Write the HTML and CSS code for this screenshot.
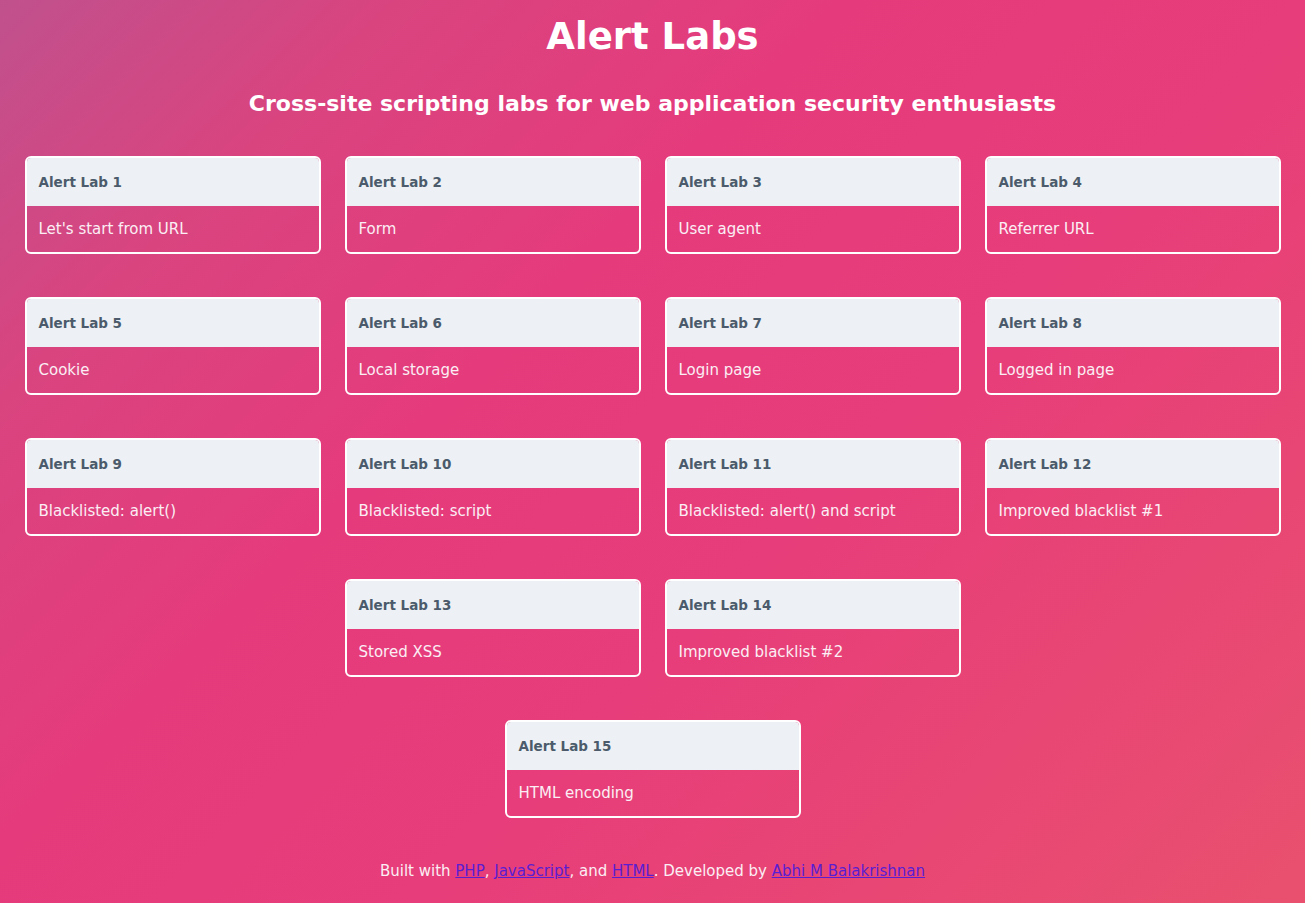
FILE: index.html
```html
<!DOCTYPE html>
<html lang="en">
<head>
<meta charset="utf-8">
<title>Alert Labs</title>
<link rel="stylesheet" href="styles.css">
</head>
<body>
<header class="hero">
  <h1 class="title">Alert Labs</h1>
  <h2 class="subtitle">Cross-site scripting labs for web application security enthusiasts</h2>
</header>
<main class="labs">
  <div class="row">
    <a class="card" href="#"><div class="card-head">Alert Lab 1</div><div class="card-body">Let's start from URL</div></a>
    <a class="card" href="#"><div class="card-head">Alert Lab 2</div><div class="card-body">Form</div></a>
    <a class="card" href="#"><div class="card-head">Alert Lab 3</div><div class="card-body">User agent</div></a>
    <a class="card" href="#"><div class="card-head">Alert Lab 4</div><div class="card-body">Referrer URL</div></a>
  </div>
  <div class="row">
    <a class="card" href="#"><div class="card-head">Alert Lab 5</div><div class="card-body">Cookie</div></a>
    <a class="card" href="#"><div class="card-head">Alert Lab 6</div><div class="card-body">Local storage</div></a>
    <a class="card" href="#"><div class="card-head">Alert Lab 7</div><div class="card-body">Login page</div></a>
    <a class="card" href="#"><div class="card-head">Alert Lab 8</div><div class="card-body">Logged in page</div></a>
  </div>
  <div class="row">
    <a class="card" href="#"><div class="card-head">Alert Lab 9</div><div class="card-body">Blacklisted: alert()</div></a>
    <a class="card" href="#"><div class="card-head">Alert Lab 10</div><div class="card-body">Blacklisted: script</div></a>
    <a class="card" href="#"><div class="card-head">Alert Lab 11</div><div class="card-body">Blacklisted: alert() and script</div></a>
    <a class="card" href="#"><div class="card-head">Alert Lab 12</div><div class="card-body">Improved blacklist #1</div></a>
  </div>
  <div class="row">
    <a class="card" href="#"><div class="card-head">Alert Lab 13</div><div class="card-body">Stored XSS</div></a>
    <a class="card" href="#"><div class="card-head">Alert Lab 14</div><div class="card-body">Improved blacklist #2</div></a>
  </div>
  <div class="row">
    <a class="card" href="#"><div class="card-head">Alert Lab 15</div><div class="card-body">HTML encoding</div></a>
  </div>
</main>
<footer class="footer">
  Built with <a href="#">PHP</a>, <a href="#">JavaScript</a>, and <a href="#">HTML</a>. Developed by <a href="#">Abhi M Balakrishnan</a>
</footer>
</body>
</html>
```
FILE: styles.css
```css
html, body {
  margin: 0;
  padding: 0;
}
body {
  min-height: 903px;
  font-family: "DejaVu Sans", "Noto Sans", sans-serif;
  color: #fff;
  background: linear-gradient(135deg, #c0518d 0%, #d9447f 18%, #e53b7c 38%, #e73d7a 60%, #e9506e 100%);
  background-attachment: fixed;
}
.hero {
  text-align: center;
  padding-top: 14px;
}
.title {
  margin: 0;
  font-size: 37px;
  line-height: 46px;
  font-weight: 700;
}
.subtitle {
  margin: 29px 0 0;
  font-size: 22px;
  line-height: 30px;
  font-weight: 700;
}
.labs {
  display: flex;
  flex-direction: column;
  row-gap: 43px;
  margin-top: 37px;
}
.row {
  display: flex;
  justify-content: center;
  column-gap: 24px;
}
.card {
  width: 296px;
  box-sizing: border-box;
  border: 2px solid #fff;
  border-radius: 6px;
  overflow: hidden;
  text-decoration: none;
  color: #fff;
  display: flex;
  flex-direction: column;
}
.card-head {
  height: 48px;
  display: flex;
  align-items: center;
  padding: 0 12px;
  background: #edf1f5;
  color: #4b5b6b;
  font-weight: 700;
  font-size: 13.5px;
}
.card-body {
  height: 46px;
  display: flex;
  align-items: center;
  padding: 0 12px;
  font-size: 15px;
  color: #fbeef4;
}
.footer {
  text-align: center;
  font-size: 15px;
  margin-top: 44px;
  color: #fbeef4;
}
.footer a {
  color: #5a1ed2;
}
```
